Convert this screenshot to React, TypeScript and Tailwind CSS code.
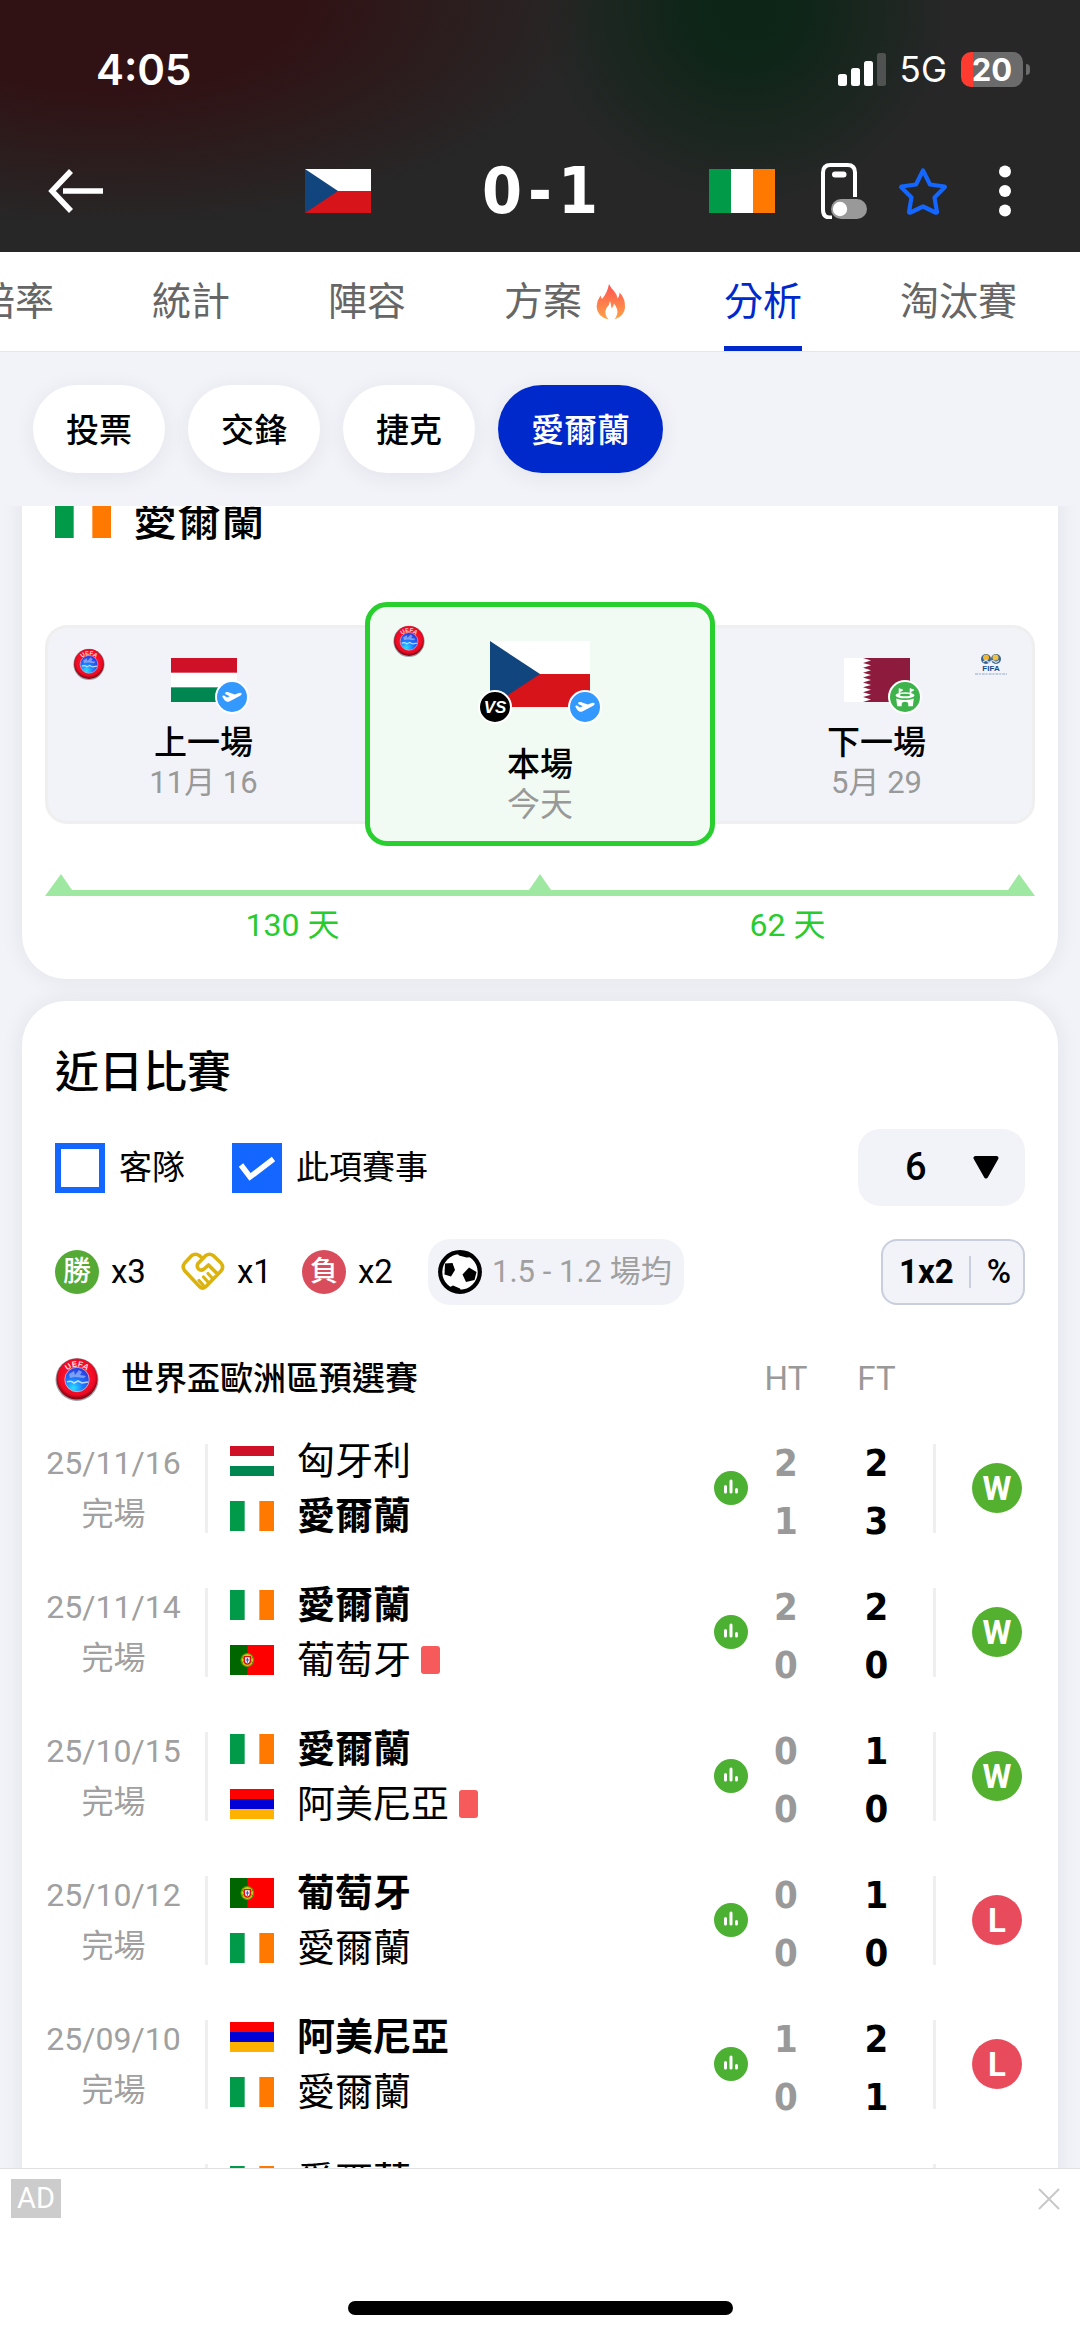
import React from "react";

type Country = "cz" | "ie" | "hu" | "qa" | "pt" | "am";

function Flag({ c, className }: { c: Country; className: string }) {
  return (
    <svg viewBox="0 0 66 44" preserveAspectRatio="none" className={"shrink-0 " + className} aria-hidden="true">
      {c === "cz" && (
        <>
          <rect width="66" height="22" fill="#fff" />
          <rect y="22" width="66" height="22" fill="#d7141a" />
          <path d="M0 0L33 22L0 44Z" fill="#11457e" />
        </>
      )}
      {c === "ie" && (
        <>
          <rect width="66" height="44" fill="#fff" />
          <rect width="22" height="44" fill="#009a49" />
          <rect x="44" width="22" height="44" fill="#ff7900" />
        </>
      )}
      {c === "hu" && (
        <>
          <rect width="66" height="44" fill="#fff" />
          <rect width="66" height="14.67" fill="#ce1126" />
          <rect y="29.33" width="66" height="14.67" fill="#008751" />
        </>
      )}
      {c === "qa" && (
        <>
          <rect width="66" height="44" fill="#fff" />
          <path
            d="M66 0H19L27 2.44L19 4.89L27 7.33L19 9.78L27 12.22L19 14.67L27 17.11L19 19.56L27 22L19 24.44L27 26.89L19 29.33L27 31.78L19 34.22L27 36.67L19 39.11L27 41.56L19 44H66Z"
            fill="#8d1b3d"
          />
        </>
      )}
      {c === "pt" && (
        <>
          <rect width="66" height="44" fill="#f00" />
          <rect width="26" height="44" fill="#060" />
          <circle cx="26" cy="22" r="9.5" fill="#c8d010" stroke="#6b8f00" strokeWidth="1.5" />
          <path d="M17 18L35 26M17 26L35 18" stroke="#3f7a00" strokeWidth="1.2" />
          <path d="M20.5 16H31.500V23.500Q31.500 28.500 26 29Q20.500 28.500 20.500 23.500Z" fill="#e01010" />
          <path d="M22.500 18H29.500V23.500Q29.500 26.500 26 27Q22.500 26.500 22.500 23.500Z" fill="#fff" />
          <path d="M26 19V26M23.500 22H28.500" stroke="#2b49c8" strokeWidth="1.6" />
        </>
      )}
      {c === "am" && (
        <>
          <rect width="66" height="15" fill="#f00" />
          <rect y="14.67" width="66" height="15" fill="#0000d6" />
          <rect y="29.33" width="66" height="14.67" fill="#ffb100" />
        </>
      )}
    </svg>
  );
}

function UefaLogo({ className, id }: { className: string; id: string }) {
  return (
    <svg viewBox="0 0 44 44" className={className} role="img" aria-label="UEFA">
      <defs>
        <radialGradient id={id + "r"} cx="50%" cy="45%" r="52%">
          <stop offset="0.55" stopColor="#ff1028" />
          <stop offset="0.85" stopColor="#ec0a24" />
          <stop offset="1" stopColor="#8e0714" />
        </radialGradient>
        <radialGradient id={id + "b"} cx="35%" cy="85%" r="80%">
          <stop offset="0" stopColor="#2be0ff" />
          <stop offset="0.5" stopColor="#1b78ff" />
          <stop offset="1" stopColor="#2a3fe0" />
        </radialGradient>
        <path id={id + "p"} d="M9.500 19A13 13 0 0 1 34.500 19" />
      </defs>
      <circle cx="22" cy="22.500" r="21.500" fill="#9aa3a8" />
      <circle cx="22" cy="22" r="20.500" fill={"url(#" + id + "r)"} />
      <circle cx="22" cy="22.500" r="12.200" fill={"url(#" + id + "b)"} stroke="#e8b9c8" strokeWidth="0.800" />
      <path d="M14 17L19 14L20 18L24 13L27 15L25 18L31 19L29 21L20 20L15 21Z" fill="#b9c8f5" opacity="0.6" />
      <path d="M12 25Q16 23 19 26L23 24L27 26L33 25" stroke="#dff0ff" strokeWidth="1.600" fill="none" opacity="0.8" />
      <text className="font-['Liberation_Sans'] text-[8px] font-bold" fill="#ffd9dd" textAnchor="middle">
        <textPath href={"#" + id + "p"} startOffset="50%">UEFA</textPath>
      </text>
    </svg>
  );
}

function FifaLogo() {
  return (
    <svg viewBox="0 0 34 34" className="size-[34px]" role="img" aria-label="FIFA">
      <circle cx="12" cy="11" r="5" fill="#39648f" />
      <circle cx="22" cy="11" r="5" fill="#39648f" />
      <circle cx="12" cy="9.500" r="3" fill="#f3b530" />
      <circle cx="21.500" cy="9.500" r="3" fill="#f5c13d" />
      <path d="M9 14L12 12L15 14.500L19 12.500L22 14.500L25 12.500" stroke="#cfe0ee" strokeWidth="1.200" fill="none" />
      <text x="17" y="23" textAnchor="middle" className="font-['Liberation_Sans'] text-[8px] font-bold" fill="#14508f">FIFA</text>
      <path d="M1 26H33" stroke="#8fa6c4" strokeWidth="1.200" strokeDasharray="3 0.800 2 1" />
    </svg>
  );
}

function PlaneBadge({ className }: { className: string }) {
  return (
    <svg viewBox="0 0 34 34" className={className} role="img" aria-label="客場">
      <circle cx="17" cy="17" r="17" fill="#fff" />
      <circle cx="17" cy="17" r="15" fill="#3399ff" />
      <path
        d="M7.300 16.500Q7.500 15.200 9 15.600L12 17.500L14.800 16.300L10.200 14L10.300 12.500Q11.200 11.600 12.600 12L19.800 14.400L23.800 12.900Q26.200 12.200 26.700 13.800Q26.800 15 25.200 15.800L14.800 21.300Q12 22.700 9.900 20.500Q8.300 18.500 7.300 16.500Z"
        fill="#fff"
      />
    </svg>
  );
}

function StadiumBadge({ className }: { className: string }) {
  return (
    <svg viewBox="0 0 34 34" className={className} role="img" aria-label="主場">
      <circle cx="17" cy="17" r="17" fill="#fff" />
      <circle cx="17" cy="17" r="15" fill="#3eb34c" />
      <path d="M11 8.500L15 10L12 11.800V13H11ZM22 8.500L26 10L23 11.800V13H22Z" fill="#fff" stroke="#fff" strokeWidth="0.600" />
      <ellipse cx="17" cy="15.300" rx="9.500" ry="3" fill="#fff" />
      <ellipse cx="17" cy="15" rx="5.200" ry="1.300" fill="#3eb34c" />
      <path d="M8.200 18.500Q17 21.500 25.800 18.500L24.800 26.300H20.300V23.500Q20 21.700 17 21.700Q14 21.700 13.700 23.500V26.300H9.200Z" fill="#fff" />
    </svg>
  );
}

function Handshake() {
  return (
    <svg
      viewBox="0 0 44 40"
      className="h-10 w-11 shrink-0"
      fill="none"
      stroke="#dcb30c"
      strokeWidth="3.600"
      strokeLinecap="round"
      strokeLinejoin="round"
      role="img"
      aria-label="和"
    >
      <path d="M21.500 6.500L18.500 3.700Q14.500 .800 10.500 3.700L3.700 11Q.700 15 3.700 18.700L18 34Q21.500 38 25 34.500L40 19Q43.200 15 40 11L32.500 3.700Q28.500 .800 24.500 3.700L17 11.500Q15.300 14.500 17.500 17Q20 19.200 23 17L27.500 13L36 21.500" />
      <path d="M27 21.500L31.500 26.500M22.500 25L27 30M18 28.500L22.500 33.500" strokeWidth="3.200" />
    </svg>
  );
}

function Football() {
  return (
    <svg viewBox="0 0 44 44" className="size-11 shrink-0" aria-hidden="true">
      <circle cx="22" cy="22" r="19.800" fill="#fff" stroke="#000" strokeWidth="4.200" />
      <path d="M7 13.500L14.500 13L17 20L13 26.500L6.500 24.500Z" />
      <path d="M24.500 24.500L31 17.500L38.500 22L36.500 30L28 32Z" />
      <path d="M19 2.500Q28 1 35 7L28.500 7.500L21 5.500Z" />
      <path d="M11 37.500L15 35.500L22 38.500L24 42.500Q16 42.500 11 37.500Z" />
    </svg>
  );
}

function Flame() {
  return (
    <svg viewBox="0 0 30 36" className="h-9 w-[30px]" aria-hidden="true">
      <defs>
        <linearGradient id="flame" x1="0" y1="0" x2="0" y2="1">
          <stop offset="0" stopColor="#ff5252" />
          <stop offset="1" stopColor="#ffa347" />
        </linearGradient>
      </defs>
      <path
        d="M13 0Q14.500 3.500 18 7Q21 10.500 21.500 14.500Q23.500 12.500 23.700 8.500Q29.500 15 29 23.500Q28.500 32 18.500 35.500Q22.500 30 21 25Q20 22 18 19.500Q17.800 22.500 15.500 24.500Q15 19.500 14 17Q13.500 21 10.500 24Q7.500 29.500 12.500 35.500Q1 32.500 .600 22.500Q.700 17 4.500 11.500Q5 13.500 6 15Q11.500 8.500 13 0Z"
        fill="url(#flame)"
      />
    </svg>
  );
}

const tabs = ["賠率", "統計", "陣容", "方案", "分析", "淘汰賽"];

function Tabs() {
  return (
    <nav className="flex h-[100px] shrink-0 justify-end gap-[98px] overflow-hidden border-b border-[#e6e6e8] bg-white pr-[63px]">
      {tabs.map((t) => (
        <a
          key={t}
          href="#"
          aria-current={t === "分析" ? "page" : undefined}
          className={
            "flex shrink-0 items-center gap-3.5 border-y-5 border-t-transparent text-[39px] leading-[56px] " +
            (t === "分析" ? "border-b-[#0029cc] text-[#0029cc]" : "border-b-transparent text-[#666]")
          }
        >
          {t}
          {t === "方案" && <Flame />}
        </a>
      ))}
    </nav>
  );
}

function Header() {
  return (
    <header className="shrink-0 bg-[#272727] bg-[radial-gradient(ellipse_45%_90%_at_10%_0%,#301214_0%,#301214_40%,transparent_100%),radial-gradient(ellipse_19%_78%_at_69%_4%,#0c2517_0%,#0e2518_25%,transparent_100%)] pb-2 text-white">
      <div className="flex h-[138px] items-center justify-between pr-[50px] pl-24">
        <time className="font-[Inter] text-[42px] font-semibold">4:05</time>
        <div className="flex items-center gap-3.5">
          <svg viewBox="0 0 48 33" className="h-[33px] w-12" aria-label="訊號" role="img">
            <rect y="21" width="9" height="12" rx="2.500" fill="#fff" />
            <rect x="13" y="15" width="9" height="18" rx="2.500" fill="#fff" />
            <rect x="26" y="8" width="9" height="25" rx="2.500" fill="#fff" />
            <rect x="39" width="9" height="33" rx="2.500" fill="#505251" />
          </svg>
          <span className="font-[Inter] text-[35px] leading-none">5G</span>
          <div className="flex items-center gap-[3px]">
            <div className="flex h-[35px] w-[62px] items-center justify-center rounded-[10px] bg-linear-to-r from-[#ff3b30] from-20% to-[#6b6b6b] to-20% font-[Inter] text-[31px] leading-none font-bold">
              20
            </div>
            <div className="h-[11px] w-1 rounded-r-full bg-[#6b6b6b]" />
          </div>
        </div>
      </div>
      <div className="grid h-[106px] grid-cols-[1fr_470px_1fr] items-center">
        <button aria-label="返回" className="w-fit pl-12">
          <svg viewBox="0 0 56 44" className="h-11 w-14" fill="none" stroke="#fff" strokeWidth="5.500" aria-hidden="true">
            <path d="M23 2L4 22L23 42M15 22H55" />
          </svg>
        </button>
        <div className="flex items-center justify-between">
          <Flag c="cz" className="h-11 w-[66px]" />
          <div className="flex items-center gap-1.5 font-['DejaVu_Sans_Condensed','DejaVu_Sans'] text-[64px] leading-none font-bold">
            <span>0</span>
            <span>-</span>
            <span>1</span>
          </div>
          <Flag c="ie" className="h-11 w-[66px]" />
        </div>
        <div className="flex items-center gap-8 pl-[46px]">
          <button aria-label="浮動比分">
            <svg viewBox="0 0 46 56" className="h-14 w-[46px]" fill="none" aria-hidden="true">
              <path d="M11 54.500H9Q2 54.500 2 47V9.500Q2 2 9.500 2H26.500Q34 2 34 9.500V34" stroke="#fff" strokeWidth="4" />
              <rect x="11" y="8.500" width="14.500" height="6" rx="3" fill="#fff" />
              <rect x="10" y="36" width="36" height="20" rx="10" fill="#999" />
              <circle cx="19" cy="46" r="7.200" fill="#fff" />
            </svg>
          </button>
          <button aria-label="收藏">
            <svg viewBox="0 0 48 48" className="size-12" fill="none" stroke="#1366ff" strokeWidth="4.200" strokeLinejoin="round" aria-hidden="true">
              <path d="M24 3.500L31 17.500L45.500 19.500Q46 20 45.500 20.500L35.500 30.500L38 45Q37.500 46 36.500 45.500L24 39.500L11.500 45.500Q10 46 10 45L12.500 30.500L2.500 20.500Q2 20 2.500 19.500L17 17.500Z" />
            </svg>
          </button>
          <button aria-label="更多" className="flex w-[52px] justify-center">
            <svg viewBox="0 0 12 52" className="h-[52px] w-3" fill="#fff" aria-hidden="true">
              <circle cx="6" cy="6.500" r="6" />
              <circle cx="6" cy="26" r="6" />
              <circle cx="6" cy="45.500" r="6" />
            </svg>
          </button>
        </div>
      </div>
    </header>
  );
}

function NextMatches() {
  const side = "relative flex flex-1 flex-col items-center border-[#efefef] bg-[#f2f3f8] pt-[30px] pb-[18px]";
  return (
    <section className="rounded-[44px] bg-white px-[23px] pt-6 pb-6 shadow-[0_0_22px_rgba(30,40,80,0.08)]">
      <h2 className="mb-[50px] flex h-[66px] items-center gap-[22px] pl-2.5 text-[44px] leading-[66px] font-medium">
        <Flag c="ie" className="h-[37px] w-14" />
        <span className="pt-1">愛爾蘭</span>
      </h2>
      <div className="flex items-center text-[33px] leading-[40px]">
        <div className={side + " rounded-l-[22px] border-y-3 border-l-3 pr-1.5"}>
          <UefaLogo id="u1" className="absolute top-5 left-[25px] size-8" />
          <div className="relative">
            <Flag c="hu" className="h-11 w-[66px]" />
            <PlaneBadge className="absolute top-[22px] left-11 size-[34px]" />
          </div>
          <p className="mt-[21px] font-medium">上一場</p>
          <p className="text-[31px] text-[#999]">11月 16</p>
        </div>
        <div className="relative flex w-[350px] flex-col items-center rounded-[22px] border-5 border-[#28cf2e] bg-[#f2fbf3] pt-[34px] pb-4">
          <UefaLogo id="u2" className="absolute top-[18px] left-[23px] size-8" />
          <div className="relative">
            <Flag c="cz" className="h-[66px] w-[100px]" />
            <div className="absolute top-[49px] -left-3 flex size-[34px] items-center justify-center rounded-full border-2 border-white bg-black font-['Liberation_Sans'] text-[17px] leading-none font-bold text-white italic">
              VS
            </div>
            <PlaneBadge className="absolute top-[49px] -right-3 size-[34px]" />
          </div>
          <p className="mt-[38px] font-medium">本場</p>
          <p className="text-[#999]">今天</p>
        </div>
        <div className={side + " rounded-r-[22px] border-y-3 border-r-3 pl-1.5"}>
          <div className="absolute top-5 right-6">
            <FifaLogo />
          </div>
          <div className="relative">
            <Flag c="qa" className="h-11 w-[66px]" />
            <StadiumBadge className="absolute top-[22px] left-11 size-[34px]" />
          </div>
          <p className="mt-[21px] font-medium">下一場</p>
          <p className="text-[31px] text-[#999]">5月 29</p>
        </div>
      </div>
      <svg viewBox="0 0 990 22" className="mt-7 w-full" fill="#9fe8a1" aria-hidden="true">
        <path d="M0 22L16 0L27 16H484L495 0L506 16H963L974 0L990 22Z" />
      </svg>
      <div className="grid grid-cols-2 pt-[9px] pb-2.5 text-center text-[32px] leading-[40px] text-[#28cc2d]">
        <span>130 天</span>
        <span>62 天</span>
      </div>
    </section>
  );
}

function Check({ label, checked }: { label: string; checked?: boolean }) {
  return (
    <label className="flex items-center gap-3.5 text-[33px] leading-[50px]">
      <span className="relative flex">
        <input
          type="checkbox"
          defaultChecked={checked}
          className="peer size-[50px] appearance-none border-6 border-[#1366ff] bg-white checked:bg-[#1366ff]"
        />
        <svg viewBox="0 0 50 50" className="pointer-events-none absolute inset-0 hidden size-[50px] peer-checked:block" fill="none" stroke="#fff" strokeWidth="5.500" aria-hidden="true">
          <path d="M9 22L18 34L41.500 16" />
        </svg>
      </span>
      {label}
    </label>
  );
}

type Match = {
  date: string;
  teams: [Country, string, boolean, boolean][];
  ht: [number, number];
  ft: [number, number];
  result: "W" | "L" | "D";
};

const IE = "愛爾蘭";
const matches: Match[] = [
  { date: "25/11/16", teams: [["hu", "匈牙利", false, false], ["ie", IE, true, false]], ht: [2, 1], ft: [2, 3], result: "W" },
  { date: "25/11/14", teams: [["ie", IE, true, false], ["pt", "葡萄牙", false, true]], ht: [2, 0], ft: [2, 0], result: "W" },
  { date: "25/10/15", teams: [["ie", IE, true, false], ["am", "阿美尼亞", false, true]], ht: [0, 0], ft: [1, 0], result: "W" },
  { date: "25/10/12", teams: [["pt", "葡萄牙", true, false], ["ie", IE, false, false]], ht: [0, 0], ft: [1, 0], result: "L" },
  { date: "25/09/10", teams: [["am", "阿美尼亞", true, false], ["ie", IE, false, false]], ht: [1, 0], ft: [2, 1], result: "L" },
  { date: "25/09/07", teams: [["ie", IE, false, false], ["hu", "匈牙利", false, false]], ht: [0, 2], ft: [2, 2], result: "D" },
];

const resultColor = { W: "bg-[#54b130]", L: "bg-[#e84c5c]", D: "bg-[#dcb30c]" };

function Score({ s, className }: { s: [number, number]; className: string }) {
  return (
    <td className={"pt-2 text-center font-['DejaVu_Sans_Condensed','DejaVu_Sans'] text-[38px] leading-[58px] font-bold " + className}>
      <div>{s[0]}</div>
      <div>{s[1]}</div>
    </td>
  );
}

function MatchTable() {
  return (
    <table className="w-full table-fixed">
      <colgroup>
        <col className="w-[186px]" />
        <col />
        <col className="w-[42px]" />
        <col className="w-[68px]" />
        <col className="w-[113px]" />
        <col className="w-[125px]" />
      </colgroup>
      <thead>
        <tr className="h-[74px] text-[33px] leading-[44px]">
          <th colSpan={3} className="pl-[33px] text-left font-medium">
            <div className="flex items-center gap-[22px]">
              <UefaLogo id="u3" className="size-11" />
              世界盃歐洲區預選賽
            </div>
          </th>
          <th className="font-normal text-[#999]">HT</th>
          <th className="font-normal text-[#999]">FT</th>
          <th aria-label="結果" />
        </tr>
      </thead>
      <tbody>
        {matches.map((m) => (
          <tr key={m.date} className="h-36">
            <td>
              <div className="flex h-[89px] flex-col justify-between border-r-3 border-[#efefef] text-center text-[32px] leading-[38px] text-[#a0a0a0]">
                <span>{m.date}</span>
                <span>完場</span>
              </div>
            </td>
            <td className="pl-[22px]">
              <div className="flex h-[93px] flex-col justify-between text-[38px] leading-[38px]">
                {m.teams.map(([c, name, win, red]) => (
                  <div key={name} className="flex items-center">
                    <Flag c={c} className="h-[30px] w-11" />
                    <span className={"ml-[23px] " + (win ? "font-bold" : "")}>{name}</span>
                    {red && <span className="ml-2.5 h-7 w-[19px] rounded-[3px] bg-[#f65a5b]" />}
                  </div>
                ))}
              </div>
            </td>
            <td>
              <svg viewBox="0 0 34 34" className="mx-auto size-[34px]" role="img" aria-label="統計">
                <circle cx="17" cy="17" r="17" fill="#4cb132" />
                <path d="M11.500 15.500V21M17 10V21M22.500 18.500V21" stroke="#fff" strokeWidth="3" strokeLinecap="round" />
              </svg>
            </td>
            <Score s={m.ht} className="text-[#999]" />
            <Score s={m.ft} className="text-black" />
            <td>
              <div className="flex h-[89px] items-center justify-center border-l-3 border-[#efefef]">
                <span className={"flex size-[50px] items-center justify-center rounded-full font-[Roboto] text-[33px] leading-none font-bold text-white " + resultColor[m.result]}>
                  {m.result}
                </span>
              </div>
            </td>
          </tr>
        ))}
      </tbody>
    </table>
  );
}

function RecentMatches() {
  return (
    <section className="overflow-hidden rounded-t-[44px] bg-white pt-[39px] shadow-[0_0_22px_rgba(30,40,80,0.08)]">
      <h2 className="pl-[33px] text-[44px] leading-[66px] font-medium">近日比賽</h2>
      <div className="mt-[23px] flex items-center justify-between px-[33px]">
        <div className="flex items-center gap-[47px]">
          <Check label="客隊" />
          <Check label="此項賽事" checked />
        </div>
        <div className="relative h-[77px] w-[167px] rounded-[22px] bg-[#f2f3f8]">
          <select aria-label="場數" defaultValue="6" className="size-full appearance-none bg-transparent pl-[47px] font-[Roboto] text-[38px] font-medium">
            <option>6</option>
            <option>10</option>
            <option>20</option>
          </select>
          <svg viewBox="0 0 26 24" className="pointer-events-none absolute top-[26px] right-[26px] h-6 w-[26px]" stroke="#000" strokeWidth="4" strokeLinejoin="round" aria-hidden="true">
            <path d="M2.500 3H23.500L13 21.500Z" />
          </svg>
        </div>
      </div>
      <div className="mt-[33px] flex items-center justify-between px-[33px] text-[33px] leading-[66px]">
        <div className="flex items-center">
          <span className="flex size-11 items-center justify-center rounded-full bg-[#54aa35] text-[28px] leading-none font-medium text-white">勝</span>
          <span className="ml-3 w-[70px]">x3</span>
          <Handshake />
          <span className="ml-3 w-[65px]">x1</span>
          <span className="flex size-11 items-center justify-center rounded-full bg-[#d94c5c] text-[28px] leading-none font-medium text-white">負</span>
          <span className="ml-3 w-[70px]">x2</span>
          <span className="flex h-[66px] items-center gap-2.5 rounded-[22px] bg-[#f2f3f8] pr-3 pl-2.5 text-[31px] text-[#a0a0a0]">
            <Football />
            1.5 - 1.2 場均
          </span>
        </div>
        <button className="flex h-[66px] w-36 items-center justify-between rounded-[16px] border-2 border-[#c8cedc] bg-[#f2f3f8] px-3 font-medium">
          <span className="pl-1 font-bold">1x2</span>
          <span className="h-8 w-0.5 bg-[#c8cedc]" />
          <span>%</span>
        </button>
      </div>
      <div className="mt-[37px]">
        <MatchTable />
      </div>
    </section>
  );
}

export default function App() {
  return (
    <div className="flex h-screen flex-col overflow-hidden bg-[#f2f3f8] font-[Roboto,'Noto_Sans_CJK_TC',sans-serif] text-black">
      <Header />
      <Tabs />
      <div className="flex shrink-0 gap-[23px] px-[33px] py-[33px]">
        {["投票", "交鋒", "捷克", "愛爾蘭"].map((c) => (
          <button
            key={c}
            className={
              "h-[88px] rounded-full px-[33px] pt-1 text-[33px] font-medium shadow-[0_4px_22px_rgba(30,40,80,0.07)] " +
              (c === "愛爾蘭" ? "bg-[#0029cc] text-white" : "bg-white")
            }
          >
            {c}
          </button>
        ))}
      </div>
      <main className="min-h-0 flex-1 overflow-hidden px-[22px]">
        <div className="-mt-11 flex flex-col gap-[22px]">
          <NextMatches />
          <RecentMatches />
        </div>
      </main>
      <footer className="flex h-[169px] shrink-0 flex-col justify-between border-t border-[#e0e0e0] bg-white pt-2.5 pb-[22px]">
        <div className="flex items-center justify-between pr-5 pl-[11px]">
          <span className="bg-[#ccc] px-1.5 font-[Roboto] text-[29px] leading-[39px] text-white">AD</span>
          <button aria-label="關閉廣告">
            <svg viewBox="0 0 22 22" className="size-[22px]" stroke="#c8c8c8" strokeWidth="2" aria-hidden="true">
              <path d="M1 1L21 21M21 1L1 21" />
            </svg>
          </button>
        </div>
        <div className="mx-auto h-3.5 w-[385px] rounded-full bg-black" />
      </footer>
    </div>
  );
}
